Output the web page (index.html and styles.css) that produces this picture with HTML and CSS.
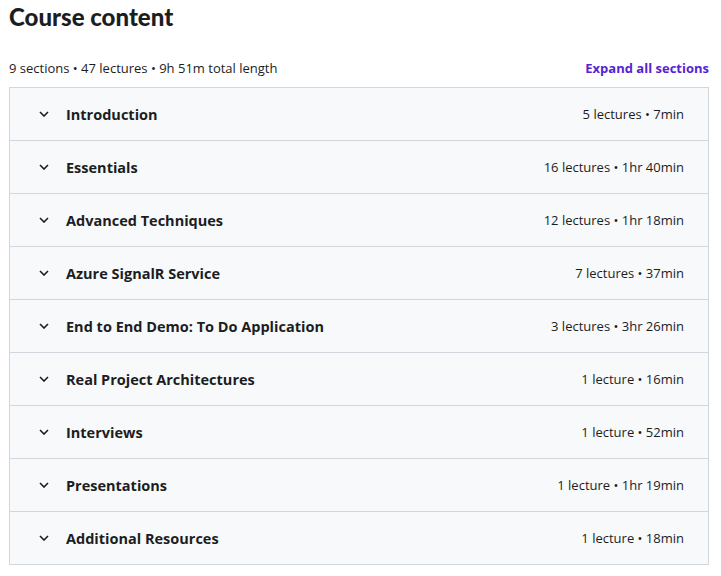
FILE: index.html
```html
<!DOCTYPE html>
<html>
<head>
<meta charset="utf-8">
<link rel="stylesheet" href="styles.css">
</head>
<body>
<div class="course">
  <h2 class="title">Course content</h2>
  <div class="summary">
    <span class="stats">9 sections • 47 lectures • 9h 51m total length</span>
    <a class="expand" href="#">Expand all sections</a>
  </div>
  <div class="sections">
    <div class="row"><span class="chev"><svg viewBox="0 0 10 6" width="10" height="6"><path d="M1 1 L5 5 L9 1" fill="none" stroke="#1c1d1f" stroke-width="1.6"/></svg></span><span class="name">Introduction</span><span class="meta">5 lectures • 7min</span></div>
    <div class="row"><span class="chev"><svg viewBox="0 0 10 6" width="10" height="6"><path d="M1 1 L5 5 L9 1" fill="none" stroke="#1c1d1f" stroke-width="1.6"/></svg></span><span class="name">Essentials</span><span class="meta">16 lectures • 1hr 40min</span></div>
    <div class="row"><span class="chev"><svg viewBox="0 0 10 6" width="10" height="6"><path d="M1 1 L5 5 L9 1" fill="none" stroke="#1c1d1f" stroke-width="1.6"/></svg></span><span class="name">Advanced Techniques</span><span class="meta">12 lectures • 1hr 18min</span></div>
    <div class="row"><span class="chev"><svg viewBox="0 0 10 6" width="10" height="6"><path d="M1 1 L5 5 L9 1" fill="none" stroke="#1c1d1f" stroke-width="1.6"/></svg></span><span class="name">Azure SignalR Service</span><span class="meta">7 lectures • 37min</span></div>
    <div class="row"><span class="chev"><svg viewBox="0 0 10 6" width="10" height="6"><path d="M1 1 L5 5 L9 1" fill="none" stroke="#1c1d1f" stroke-width="1.6"/></svg></span><span class="name">End to End Demo: To Do Application</span><span class="meta">3 lectures • 3hr 26min</span></div>
    <div class="row"><span class="chev"><svg viewBox="0 0 10 6" width="10" height="6"><path d="M1 1 L5 5 L9 1" fill="none" stroke="#1c1d1f" stroke-width="1.6"/></svg></span><span class="name">Real Project Architectures</span><span class="meta">1 lecture • 16min</span></div>
    <div class="row"><span class="chev"><svg viewBox="0 0 10 6" width="10" height="6"><path d="M1 1 L5 5 L9 1" fill="none" stroke="#1c1d1f" stroke-width="1.6"/></svg></span><span class="name">Interviews</span><span class="meta">1 lecture • 52min</span></div>
    <div class="row"><span class="chev"><svg viewBox="0 0 10 6" width="10" height="6"><path d="M1 1 L5 5 L9 1" fill="none" stroke="#1c1d1f" stroke-width="1.6"/></svg></span><span class="name">Presentations</span><span class="meta">1 lecture • 1hr 19min</span></div>
    <div class="row"><span class="chev"><svg viewBox="0 0 10 6" width="10" height="6"><path d="M1 1 L5 5 L9 1" fill="none" stroke="#1c1d1f" stroke-width="1.6"/></svg></span><span class="name">Additional Resources</span><span class="meta">1 lecture • 18min</span></div>
  </div>
</div>
</body>
</html>
```

FILE: styles.css
```css
html, body {
  margin: 0;
  padding: 0;
  background: #ffffff;
}
body {
  font-family: "Open Sans", "Noto Sans", sans-serif;
  color: #1c1d1f;
}
.course {
  padding: 0 12px 0 9px;
}
.title {
  margin: 0;
  padding-top: 2px;
  font-family: Lato, "Open Sans", sans-serif;
  font-size: 24px;
  font-weight: 900;
  line-height: 30px;
}
.summary {
  display: flex;
  justify-content: space-between;
  align-items: center;
  margin-top: 24px;
  height: 24px;
  font-size: 13px;
}
.expand {
  color: #5624d0;
  font-weight: 700;
  text-decoration: none;
}
.sections {
  margin-top: 7px;
  border: 1px solid #d1d7dc;
  border-bottom: none;
}
.row {
  display: flex;
  align-items: center;
  height: 52px;
  background: #f7f9fa;
  border-bottom: 1px solid #d1d7dc;
  padding: 0 24px 0 29px;
}
.chev {
  width: 27px;
  display: flex;
  align-items: center;
}
.name {
  flex: 1;
  font-size: 14.5px;
  font-weight: 700;
}
.meta {
  font-size: 13px;
}
```
